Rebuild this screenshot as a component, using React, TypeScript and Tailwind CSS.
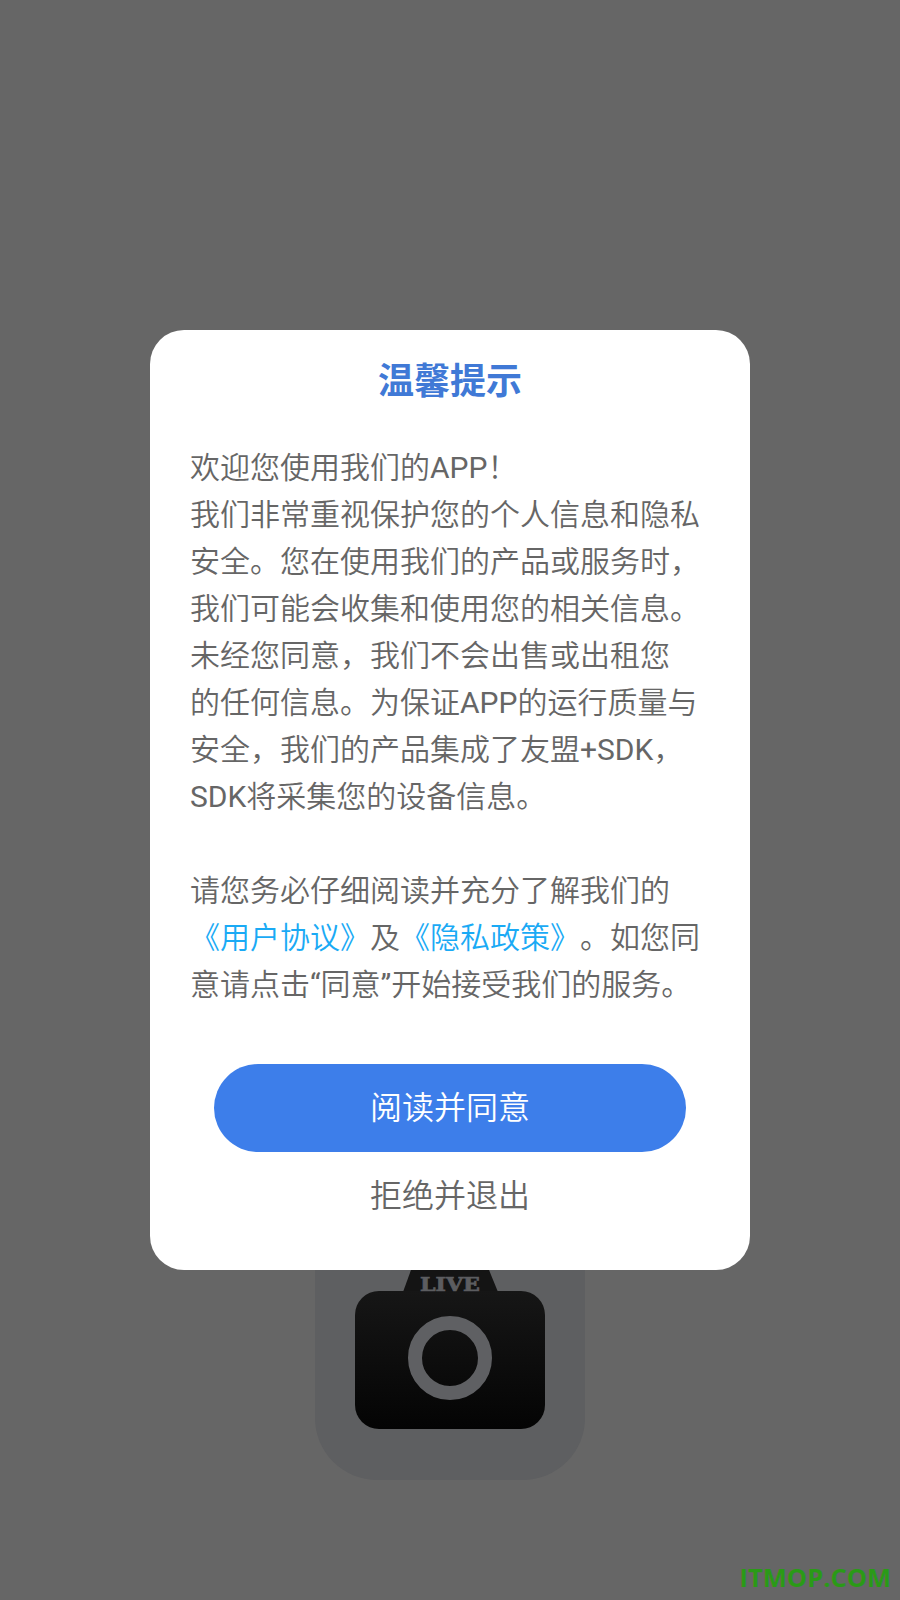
import React from 'react';

const CameraIcon: React.FC = () => (
    <svg width="270" height="270" viewBox="0 0 270 270">
        <defs>
            <linearGradient id="bodyFill" x1="0" y1="0" x2="0" y2="1">
                <stop offset="0" stopColor="#161616" />
                <stop offset="1" stopColor="#040404" />
            </linearGradient>
        </defs>
        <rect width="270" height="270" rx="62" fill="#5e5f61" />
        {/* viewfinder hump */}
        <path d="M88 82 L96 60 L174 60 L183 82 Z" fill="#141414" />
        <rect x="40" y="81" width="190" height="138" rx="24" fill="url(#bodyFill)" />
        <circle cx="135" cy="148" r="35" fill="none" stroke="#5f6063" strokeWidth="14" />
        <text
            x="105"
            y="80.5"
            textLength="60"
            lengthAdjust="spacingAndGlyphs"
            fontFamily="'DejaVu Serif', serif"
            fontWeight="700"
            fontSize="18"
            fill="#5c5d60"
            stroke="#5c5d60"
            strokeWidth="0.7"
        >
            LIVE
        </text>
    </svg>
);

// Roboto has no demi-light cut, latin runs stay at regular weight
const Latin: React.FC<{ children: React.ReactNode }> = ({ children }) => (
    <span className="font-normal">{children}</span>
);

export default function App() {
    return (
        <div className="relative flex h-[1600px] w-[900px] flex-col items-center justify-end overflow-hidden bg-[#666666] pb-[120px] font-['Roboto','Noto_Sans_CJK_SC',sans-serif]">
            <CameraIcon />

            {/* Modal */}
            <div className="absolute inset-0 flex items-center justify-center">
                <div className="flex h-[940px] w-[600px] flex-col items-center rounded-[34px] bg-white">
                    <h1 className="mt-[27px] text-[36px] leading-[50px] font-bold text-[#4079d6]">温馨提示</h1>

                    <p className="mt-[37px] w-full pl-[40px] text-[30px] leading-[47px] font-[350] whitespace-nowrap text-[#666666]">
                        欢迎您使用我们的<Latin>APP</Latin>！<br />
                        我们非常重视保护您的个人信息和隐私<br />
                        安全。您在使用我们的产品或服务时，<br />
                        我们可能会收集和使用您的相关信息。<br />
                        未经您同意，我们不会出售或出租您<br />
                        的任何信息。为保证<Latin>APP</Latin>的运行质量与<br />
                        安全，我们的产品集成了友盟<Latin>+SDK</Latin>，<br />
                        <Latin>SDK</Latin>将采集您的设备信息。<br />
                        <br />
                        请您务必仔细阅读并充分了解我们的<br />
                        <span className="text-[#1aaaf5]">《用户协议》</span>及<span className="mr-[15px] text-[#1aaaf5]">《隐私政策》</span>。如您同<br />
                        意请点击<Latin>“</Latin>同意<Latin>”</Latin>开始接受我们的服务。
                    </p>

                    <button className="mt-[56px] h-[88px] w-[472px] rounded-full bg-[#3d7eea] text-[32px] font-[350] text-white">
                        阅读并同意
                    </button>
                    <button className="mt-[20px] text-[32px] leading-[48px] font-[350] text-[#666666]">拒绝并退出</button>
                </div>
            </div>

            <span className="absolute right-[9px] bottom-[7px] font-['Open_Sans',sans-serif] text-[25.5px] leading-[32px] font-bold text-[#2a9a17]">
                ITMOP.COM
            </span>
        </div>
    );
}
